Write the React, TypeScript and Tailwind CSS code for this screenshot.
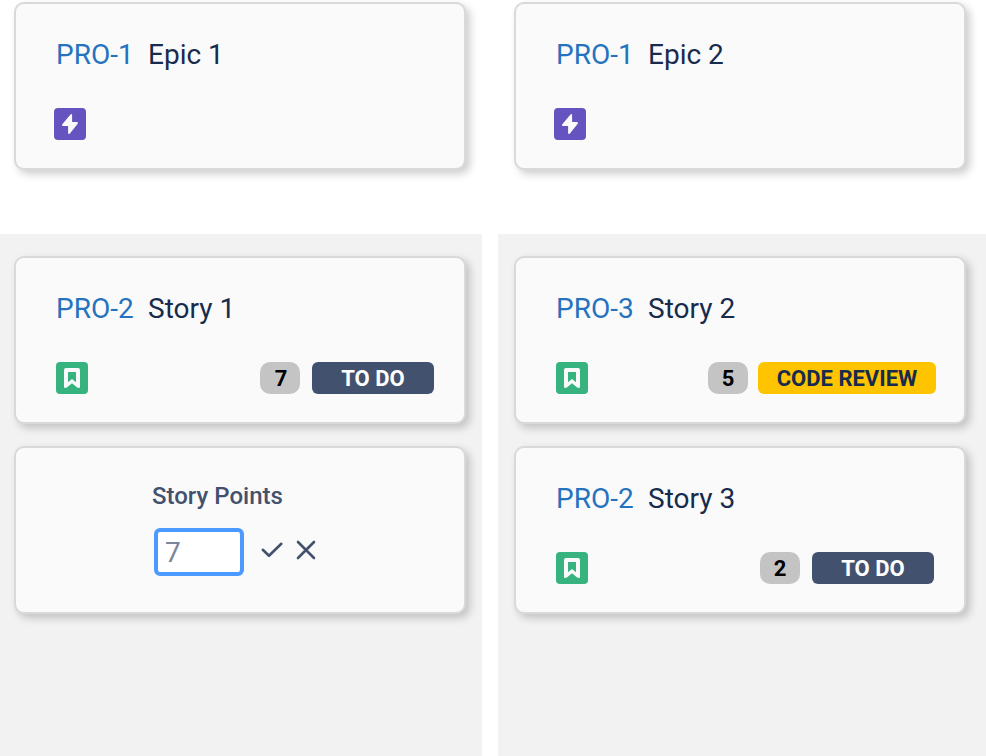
import type { ReactNode } from "react";

function Card({ children }: { children: ReactNode }) {
  return (
    <div className="h-[168px] w-[452px] shrink-0 rounded-[10px] border-2 border-[#d9d9d9] bg-[#fafafa] shadow-[4px_4px_8px_rgba(0,0,0,0.2)]">
      {children}
    </div>
  );
}

function Title({ id, name }: { id: string; name: string }) {
  return (
    <div className="flex h-8 text-[28px] leading-8 whitespace-nowrap">
      <span className="w-[92px] text-[#2573bf]">{id}</span>
      <span className="text-[#172b4d]">{name}</span>
    </div>
  );
}

function EpicIcon() {
  return (
    <svg width="32" height="32" viewBox="0 0 32 32" className="block">
      <rect width="32" height="32" rx="4" fill="#6554c0" />
      <path
        d="M17.200 7 9 16.800V17.200H15V25H15.200L23 15.200V15H17.200Z"
        fill="#fafafa"
        stroke="#fafafa"
        strokeWidth="1.800"
        strokeLinejoin="round"
      />
    </svg>
  );
}

function StoryIcon() {
  return (
    <svg width="32" height="32" viewBox="0 0 32 32" className="block">
      <rect width="32" height="32" rx="4" fill="#36b37e" />
      <path
        fillRule="evenodd"
        d="M10 6h12a2 2 0 0 1 2 2v17.800h-2.500L16 21.300 10.500 25.800H8V8a2 2 0 0 1 2-2Zm2 4v10.300l4-3.300 4 3.300V10Z"
        fill="#fafafa"
      />
    </svg>
  );
}

function EpicCard({ name }: { name: string }) {
  return (
    <Card>
      <div className="pt-[35px] pl-10">
        <Title id="PRO-1" name={name} />
      </div>
      <div className="pt-[37px] pl-[38px]">
        <EpicIcon />
      </div>
    </Card>
  );
}

function StoryCard({ id, name, points, status }: { id: string; name: string; points: number; status: "TO DO" | "CODE REVIEW" }) {
  const review = status === "CODE REVIEW";
  return (
    <Card>
      <div className="pt-[35px] pl-10">
        <Title id={id} name={name} />
      </div>
      <div className={`flex pt-[37px] pl-10 ${review ? "gap-2.5 pr-7" : "gap-3 pr-[30px]"}`}>
        <StoryIcon />
        <span
          className={`ml-auto h-8 w-10 rounded-[10px] bg-[#c4c4c4] pt-px text-center text-[22px] leading-8 font-bold text-black ${
            points === 7 ? "pl-0.5" : ""
          }`}
        >
          {points}
        </span>
        <span
          className={`h-8 rounded-[6px] pt-px text-center text-[22px] leading-8 font-bold whitespace-nowrap ${
            review ? "w-[178px] bg-[#ffc400] text-[#172b4d]" : "w-[122px] bg-[#42526e] text-white"
          }`}
        >
          {status}
        </span>
      </div>
    </Card>
  );
}

function PointsCard() {
  return (
    <Card>
      <div className="pt-[34px] pl-[136px] text-2xl leading-7 font-medium text-[#42526e]">Story Points</div>
      <div className="flex items-start pt-[18px] pl-[138px]">
        <input
          defaultValue="7"
          aria-label="Story Points"
          className="h-12 w-[90px] rounded-[6px] border-4 border-[#4c9aff] bg-white px-[7px] text-[28px] leading-8 text-[#7a869a] outline-none"
        />
        <svg width="24" height="20" viewBox="0 0 24 20" className="mt-3 ml-4" fill="none" stroke="#42526e" strokeWidth="2.600" strokeLinecap="round" strokeLinejoin="round">
          <path d="m2.800 9.800 6.200 6 12.300-12" />
        </svg>
        <svg width="20" height="20" viewBox="0 0 20 20" className="mt-3 ml-3" fill="none" stroke="#42526e" strokeWidth="2.600" strokeLinecap="round">
          <path d="m2 2 16 16M18 2 2 18" />
        </svg>
      </div>
    </Card>
  );
}

export default function App() {
  return (
    <div className="flex h-[756px] w-[986px] flex-col overflow-hidden bg-white font-[Roboto,sans-serif]">
      <header className="flex h-[234px] shrink-0 gap-12 pt-0.5 pl-3.5">
        <EpicCard name="Epic 1" />
        <EpicCard name="Epic 2" />
      </header>
      <main className="flex flex-1 gap-4">
        <section className="flex w-[482px] flex-col gap-[22px] bg-[#f2f2f2] pt-[22px] pl-3.5">
          <StoryCard id="PRO-2" name="Story 1" points={7} status="TO DO" />
          <PointsCard />
        </section>
        <section className="flex w-[488px] flex-col gap-[22px] bg-[#f2f2f2] pt-[22px] pl-4">
          <StoryCard id="PRO-3" name="Story 2" points={5} status="CODE REVIEW" />
          <StoryCard id="PRO-2" name="Story 3" points={2} status="TO DO" />
        </section>
      </main>
    </div>
  );
}
